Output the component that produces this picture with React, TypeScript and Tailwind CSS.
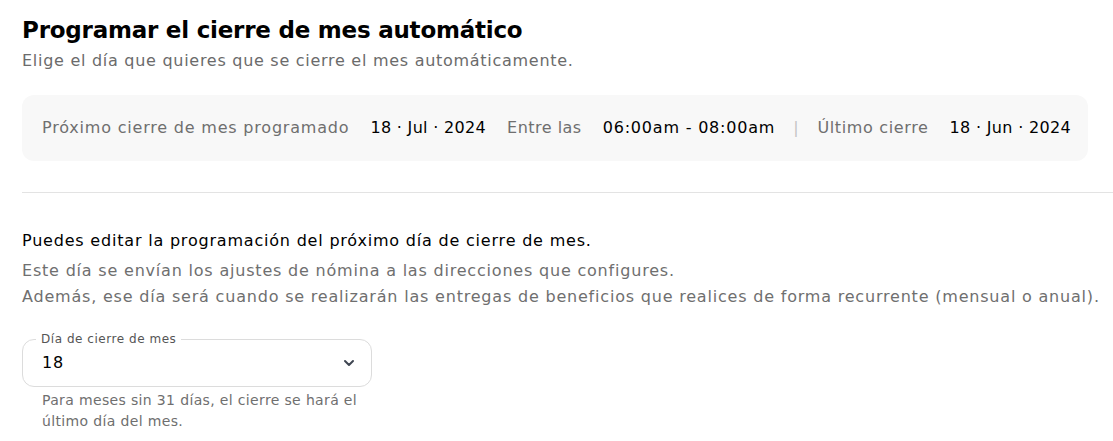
import React from "react";

const font = { fontFamily: "'DejaVu Sans', sans-serif" };

const App = () => {
  return (
    <div className="w-[1113px] h-[441px] bg-white overflow-hidden tracking-[0.05em]" style={font}>
      <div className="pl-[22px] pt-[14px]">
        <h1 className="text-[23px] leading-[32px] font-bold tracking-[-0.01em] text-black">
          Programar el cierre de mes automático
        </h1>
        <p className="text-[16px] leading-[26px] tracking-[0.045em] text-[#6b6b6b] mt-[2px]">
          Elige el día que quieres que se cierre el mes automáticamente.
        </p>
        <div className="mt-[21px] w-[1066px] h-[66px] rounded-[12px] bg-[#f8f8f8] flex items-center px-[20px] gap-[21px] text-[16px] whitespace-nowrap">
          <span className="text-[#6f6f6f]">Próximo cierre de mes programado</span>
          <span className="text-black font-medium tracking-[0.02em]">18 · Jul · 2024</span>
          <span className="text-[#6f6f6f] tracking-[0.03em]">Entre las</span>
          <span className="text-black">06:00am - 08:00am</span>
          <span className="text-[#c4c4c4] -mx-[3px]">|</span>
          <span className="text-[#6f6f6f] tracking-[0.04em]">Último cierre</span>
          <span className="text-black font-medium tracking-[0.02em]">18 · Jun · 2024</span>
        </div>
        <div className="mt-[31px] h-px bg-[#e3e3e3]" />
        <p className="mt-[35px] text-[16px] leading-[26px] font-medium text-black">
          Puedes editar la programación del próximo día de cierre de mes.
        </p>
        <p className="mt-[4px] text-[16px] leading-[26px] text-[#6f6f6f]">
          Este día se envían los ajustes de nómina a las direcciones que configures.
          <br />
          Además, ese día será cuando se realizarán las entregas de beneficios que realices de forma recurrente (mensual o anual).
        </p>
        <div className="mt-[29px] w-[350px]">
          <div className="relative h-[48px] rounded-[12px] border border-[#dcdcdc] flex items-center justify-between pl-[19px] pr-[14px]">
            <span className="absolute -top-[9px] left-[13px] bg-white px-[5px] text-[12px] leading-[16px] tracking-[0.045em] text-[#555]">
              Día de cierre de mes
            </span>
            <span className="text-[16px] text-black">18</span>
            <svg width="16" height="16" viewBox="0 0 24 24" fill="none" stroke="#3f4652" strokeWidth="3" strokeLinecap="round" strokeLinejoin="round">
              <path d="M6 9l6 6 6-6" />
            </svg>
          </div>
          <p className="mt-[3px] pl-[20px] pr-[6px] text-[14px] leading-[21px] tracking-[0.025em] text-[#6f6f6f]">
            Para meses sin 31 días, el cierre se hará el último día del mes.
          </p>
        </div>
      </div>
    </div>
  );
};

export default App;
